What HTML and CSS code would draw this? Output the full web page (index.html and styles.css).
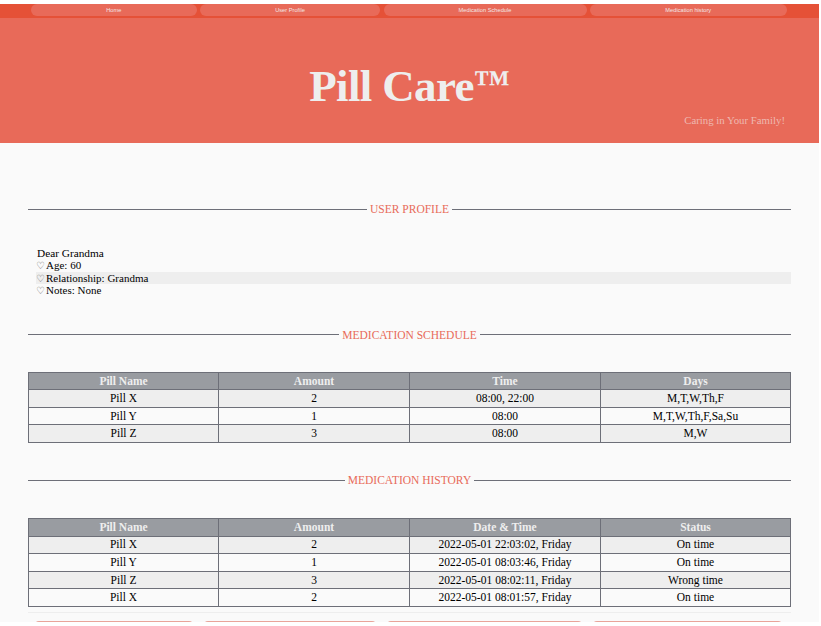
FILE: index.html
```html
<!DOCTYPE html>
<html lang="en">
<head>
<meta charset="utf-8">
<title>Pill Care</title>
<link rel="stylesheet" href="styles.css">
</head>
<body>
<div class="page">
  <nav class="nav">
    <a class="nav-btn home">Home</a>
    <a class="nav-btn profile">User Profile</a>
    <a class="nav-btn sched">Medication Schedule</a>
    <a class="nav-btn hist">Medication history</a>
  </nav>
  <header class="hero">
    <h1 class="title">Pill Care<span class="tm">™</span></h1>
    <p class="tagline">Caring in Your Family!</p>
  </header>
  <main class="content">
    <div class="divider first"><span>USER PROFILE</span></div>
    <section class="profile-box">
      <div class="line greeting">Dear Grandma</div>
      <div class="line"><span class="heart">♡</span>Age: 60</div>
      <div class="line alt"><span class="heart">♡</span>Relationship: Grandma</div>
      <div class="line"><span class="heart">♡</span>Notes: None</div>
    </section>
    <div class="divider second"><span>MEDICATION SCHEDULE</span></div>
    <table class="grid schedule">
      <thead><tr><th class="col-first">Pill Name</th><th class="col-mid">Amount</th><th class="col-mid">Time</th><th>Days</th></tr></thead>
      <tbody>
        <tr><td>Pill X</td><td>2</td><td>08:00, 22:00</td><td>M,T,W,Th,F</td></tr>
        <tr><td>Pill Y</td><td>1</td><td>08:00</td><td>M,T,W,Th,F,Sa,Su</td></tr>
        <tr><td>Pill Z</td><td>3</td><td>08:00</td><td>M,W</td></tr>
      </tbody>
    </table>
    <div class="divider third"><span>MEDICATION HISTORY</span></div>
    <table class="grid history">
      <thead><tr><th class="col-first">Pill Name</th><th class="col-mid">Amount</th><th class="col-mid">Date &amp; Time</th><th>Status</th></tr></thead>
      <tbody>
        <tr><td>Pill X</td><td>2</td><td>2022-05-01 22:03:02, Friday</td><td>On time</td></tr>
        <tr><td>Pill Y</td><td>1</td><td>2022-05-01 08:03:46, Friday</td><td>On time</td></tr>
        <tr><td>Pill Z</td><td>3</td><td>2022-05-01 08:02:11, Friday</td><td>Wrong time</td></tr>
        <tr><td>Pill X</td><td>2</td><td>2022-05-01 08:01:57, Friday</td><td>On time</td></tr>
      </tbody>
    </table>
    <div class="foot-rule"></div>
    <div class="foot-btns">
      <span class="foot-btn a"></span><span class="foot-btn b"></span><span class="foot-btn c"></span><span class="foot-btn d"></span>
    </div>
  </main>
</div>
</body>
</html>
```
FILE: styles.css
```css
html, body { margin: 0; padding: 0; background: #fff; overflow: hidden; height: 626px; }
body { font-family: "Liberation Serif", "Times New Roman", serif; font-size: 11.5px; color: #000; }
.page { width: 819px; height: 618px; margin-top: 4px; background: #fafafa; overflow: hidden; }
.nav { display: flex; gap: 3.5px; height: 14px; background: #e55137; padding-left: 31px; box-sizing: border-box; }
.nav-btn { height: 12px; background: #e86a59; border-radius: 7px; color: #f2e6e4; font: 5.7px/12px "Liberation Sans", Arial, sans-serif; text-align: center; }
.home { width: 165.5px; } .profile { width: 180px; } .sched { width: 203px; } .hist { width: 196.5px; }
.hero { height: 125px; background: #e86a59; box-sizing: border-box; display: flex; flex-direction: column; padding-top: 42px; }
.title { margin: 0; font-size: 45px; line-height: 52px; font-weight: bold; text-align: center; color: #eeeeee; letter-spacing: -0.65px; }
.tm { font-size: 36px; line-height: 0; vertical-align: 6px; letter-spacing: 0; }
.tagline { margin: 1px 0 0; padding-right: 34px; text-align: right; color: #eeb8b0; font-size: 10.8px; line-height: 14px; }
.content { padding: 0 28px; }
.divider { display: flex; align-items: center; color: #e86a59; font-size: 11.5px; line-height: 14px; }
.divider::before, .divider::after { content: ""; flex: 1; height: 1px; background: #6d6f78; }
.divider span { padding: 0 3px; }
.divider.first { margin-top: 59px; }
.divider.second { margin-top: 31px; }
.divider.third { margin-top: 30px; }
.profile-box { margin-top: 31px; padding-left: 8px; }
.line { line-height: 12.4px; font-size: 11px; }
.line.greeting { font-size: 11.3px; padding-left: 1px; }
.line.alt { background: #eeeeee; }
.heart { display: inline-block; width: 10px; color: #666; font-family: "DejaVu Sans", sans-serif; font-size: 9.8px; line-height: 10px; }
.grid { width: 763px; border-collapse: collapse; table-layout: fixed; font-size: 11.5px; }
.grid.schedule { margin-top: 30px; }
.grid.history { margin-top: 31px; }
.grid th, .grid td { border: 1px solid #6d6f78; text-align: center; padding: 0; height: 16.6px; line-height: 13px; }
.grid th.col-first { width: 189px; }
.grid th.col-mid { width: 190px; }
.grid th { background: #999ca1; color: #eeeeee; font-weight: bold; height: 15.6px; padding-top: 1px; }
.grid tbody tr:nth-child(odd) { background: #eeeeee; }
.foot-rule { height: 1px; background: #eeeeee; margin-top: 5px; }
.foot-btns { display: flex; gap: 11px; padding-left: 7px; margin-top: 8px; }
.foot-btn { flex: none; height: 12px; background: #e9a49a; border-radius: 4px 4px 0 0; }
.foot-btn.a { width: 158px; } .foot-btn.b { width: 172px; } .foot-btn.c { width: 195px; } .foot-btn.d { width: 189px; }
```
